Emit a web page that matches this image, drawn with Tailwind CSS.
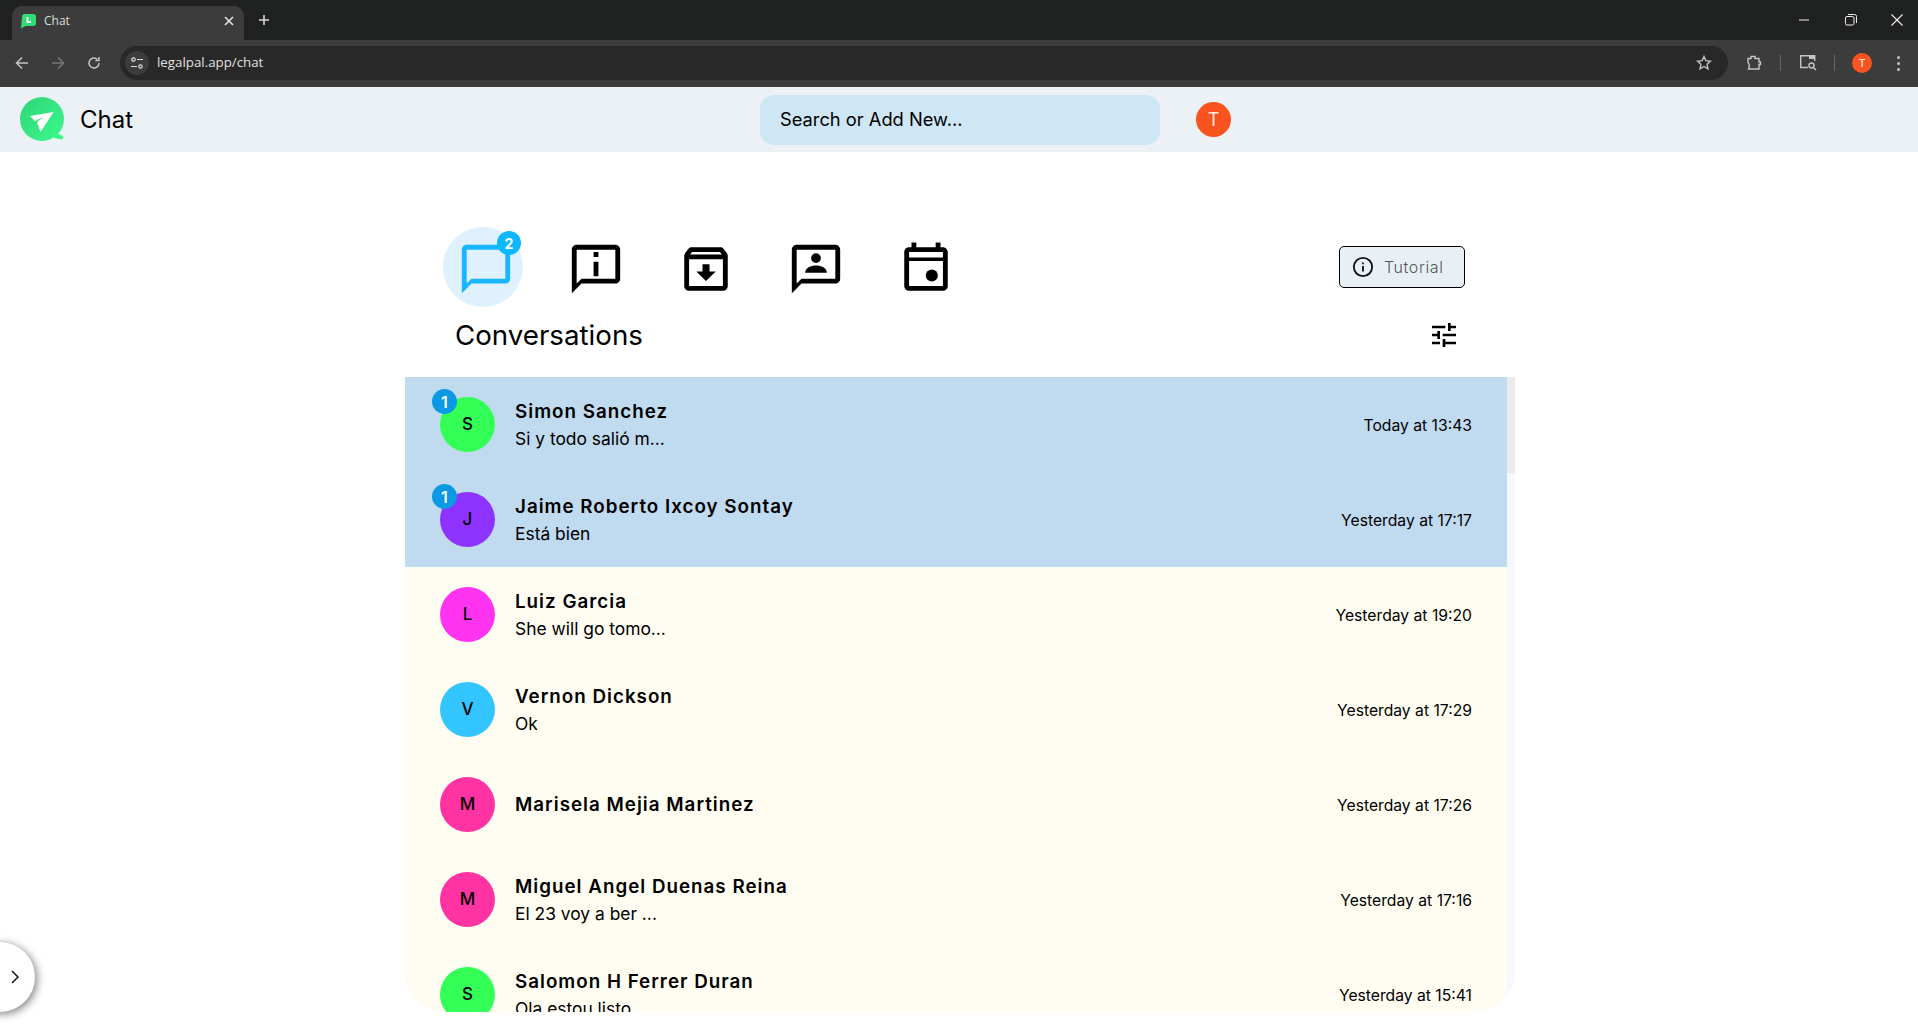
<!DOCTYPE html>
<html lang="en">
  <head>
    <meta charset="UTF-8" />
    <title>Chat</title>
    <script src="https://cdn.jsdelivr.net/npm/@tailwindcss/browser@4"></script>
  </head>
  <body class="relative h-[1030px] w-[1918px] overflow-hidden bg-white font-['Inter',sans-serif] text-black">
    <!-- Browser tab strip -->
    <div class="flex h-10 items-end bg-[#202221] pl-3 font-['Open_Sans',sans-serif]">
      <div class="flex h-[34px] w-[232px] items-center rounded-t-[10px] bg-[#3c3c3c] pb-[4px] pl-[9px] pr-[10px]">
        <svg class="h-[15px] w-[15px]" viewBox="0 0 15 15">
          <path d="M3 0h9a3 3 0 0 1 3 3v6a3 3 0 0 1-3 3H4.500L0 14.500 1 3a3 3 0 0 1 2-3z" fill="#2fdc75" />
          <path d="M6.500 3v5h3.500" fill="none" stroke="#fff" stroke-width="1.800" />
        </svg>
        <span class="ml-[8px] text-[12px] text-[#dddddd]">Chat</span>
        <svg class="ml-auto h-[10px] w-[10px]" viewBox="0 0 10 10" stroke="#e2e2e2" stroke-width="1.600">
          <path d="M1 1l8 8M9 1l-8 8" />
        </svg>
      </div>
      <svg class="mb-[14px] ml-[14px] h-[12px] w-[12px]" viewBox="0 0 12 12" stroke="#d8d8d8" stroke-width="1.600">
        <path d="M6 1v10M1 6h10" />
      </svg>
      <div class="ml-auto mb-[14px] flex items-center">
        <svg class="h-[10px] w-[12px]" viewBox="0 0 12 10" stroke="#eeeeee"><path d="M1 5h10" /></svg>
        <svg class="ml-[35px] h-[12px] w-[12px]" viewBox="0 0 12 12" fill="none" stroke="#eeeeee">
          <rect x="0.500" y="2.500" width="8.500" height="8.500" rx="1.500" /><path d="M3 .5h6.500a2 2 0 0 1 2 2V9" />
        </svg>
        <svg class="ml-[34px] mr-[15px] h-[12px] w-[12px]" viewBox="0 0 12 12" stroke="#eeeeee" stroke-width="1.100">
          <path d="M.5.5l11 11M11.500.5l-11 11" />
        </svg>
      </div>
    </div>

    <!-- Browser toolbar -->
    <div class="flex h-[47px] items-center bg-[#3c3c3c] pb-[1px] font-['Open_Sans',sans-serif]">
      <svg class="ml-[15px] h-[14px] w-[14px]" viewBox="0 0 14 14" fill="none" stroke="#c4c4c4" stroke-width="1.500">
        <path d="M13 7H2M7 1.500L1.500 7 7 12.500" />
      </svg>
      <svg class="ml-[22px] h-[14px] w-[14px]" viewBox="0 0 14 14" fill="none" stroke="#777777" stroke-width="1.500">
        <path d="M1 7h11M7 1.500L12.500 7 7 12.500" />
      </svg>
      <svg class="ml-[22px] h-[14px] w-[14px]" viewBox="0 0 14 14" fill="none" stroke="#c4c4c4" stroke-width="1.500">
        <path d="M12 7a5 5 0 1 1-1.600-3.700M12 1v3.600H8.400" />
      </svg>
      <div class="ml-[19px] flex h-[34px] w-[1608px] items-center rounded-full bg-[#282828] pl-[5px] pr-[16px]">
        <div class="flex h-[24px] w-[24px] items-center justify-center rounded-full bg-[#3c3c3c]">
          <svg class="h-[14px] w-[14px]" viewBox="0 0 14 14" fill="none" stroke="#dddddd" stroke-width="1.200">
            <circle cx="3.500" cy="3.500" r="1.700" /><circle cx="10.500" cy="10.500" r="1.700" /><path d="M7 3.500h6M1 10.500h6" />
          </svg>
        </div>
        <span class="ml-[8px] text-[13.300px] text-[#e0e0e0]">legalpal.app/chat</span>
        <svg class="ml-auto h-[16px] w-[16px]" viewBox="0 0 16 16" fill="none" stroke="#c4c4c4" stroke-width="1.400">
          <path d="M8 1.500l1.900 4.200 4.600.5-3.400 3.100.9 4.500L8 11.500l-4 2.300.9-4.500L1.500 6.200l4.600-.5z" />
        </svg>
      </div>
      <svg class="ml-[18px] h-[16px] w-[16px]" viewBox="0 0 16 16" fill="none" stroke="#c4c4c4" stroke-width="1.400">
        <path d="M2 3.500h3V1.500h4v2h4v3.500h1.500v2.500H13V14H2.500l1-3.500-1.500-3.500z" />
      </svg>
      <div class="ml-[18px] h-[16px] w-[1px] bg-[#666666]"></div>
      <svg class="ml-[18px] h-[18px] w-[18px]" viewBox="0 0 18 18" fill="none" stroke="#c4c4c4" stroke-width="1.400">
        <path d="M9 13.500H1.700V1.700h14V7" /><path d="M10 1.700h5.700V5H10z" fill="#c4c4c4" stroke="none" />
        <circle cx="12.500" cy="11.500" r="2.500" /><path d="M14.500 13.500l2.500 2.500" />
      </svg>
      <div class="ml-[17px] h-[16px] w-[1px] bg-[#666666]"></div>
      <div class="ml-[17px] flex h-[20px] w-[20px] items-center justify-center rounded-full bg-[#f95420] text-[11px] font-semibold text-[#ffe0d0]">T</div>
      <div class="ml-[25px] flex flex-col gap-[3px]">
        <div class="h-[3px] w-[3px] rounded-full bg-[#c4c4c4]"></div>
        <div class="h-[3px] w-[3px] rounded-full bg-[#c4c4c4]"></div>
        <div class="h-[3px] w-[3px] rounded-full bg-[#c4c4c4]"></div>
      </div>
    </div>

    <!-- App header -->
    <header class="flex h-[65px] items-center bg-[#ecf1f6] pl-[20px]">
      <div class="flex w-[740px] items-center">
        <svg class="h-[46px] w-[46px]" viewBox="0 0 46 46">
          <defs>
            <linearGradient id="logoGrad" x1="0" y1="0" x2="1" y2="1">
              <stop offset="0" stop-color="#2ed57a" />
              <stop offset="1" stop-color="#3cf98a" />
            </linearGradient>
          </defs>
          <circle cx="22" cy="22" r="22" fill="url(#logoGrad)" />
          <path d="M36 36l6 2.500c1.500 1 1.500 3 .5 3.500s-2.500.3-9-1z" fill="#3cf98a" />
          <path d="M10 19l23.500-4-13 20-3.500-10 7-5.500-9 4.500z" fill="#ffffff" />
        </svg>
        <span class="ml-[14px] pt-[1px] text-[24px]">Chat</span>
      </div>
      <div class="flex h-[50px] w-[400px] items-center rounded-[14px] bg-[#cfe6f4] px-[20px] pt-[1px] text-[18.300px]">Search or Add New...</div>
      <div class="ml-[36px] flex h-[35px] w-[35px] items-center justify-center rounded-full bg-[#f95420] text-[18px] text-[#ffe7dc]">T</div>
    </header>

    <main class="ml-[405px] w-[1110px]">
      <!-- Section tabs -->
      <div class="flex h-[166px] items-start pl-[38px] pr-[50px] pt-[75px]">
        <div class="relative flex h-[80px] w-[80px] items-center justify-center rounded-full bg-[#def1fd]">
          <svg class="ml-[5px] mt-[3px] h-[58px] w-[58px]" viewBox="0 0 24 24" fill="#19b5fe">
            <path d="M20 2H4c-1.100 0-2 .9-2 2v18l4-4h14c1.100 0 2-.9 2-2V4c0-1.100-.9-2-2-2zm0 14H6l-2 2V4h16v12z" />
          </svg>
          <span class="absolute right-[2px] top-[4px] flex h-[24px] w-[24px] items-center justify-center rounded-full bg-[#0cb8ff] text-[14px] font-bold text-white">2</span>
        </div>
        <div class="ml-[30px] flex h-[80px] w-[80px] items-center justify-center">
          <svg class="ml-[5px] mt-[3px] h-[58px] w-[58px]" viewBox="0 0 24 24">
            <path d="M20 2H4c-1.100 0-2 .9-2 2v18l4-4h14c1.100 0 2-.9 2-2V4c0-1.100-.9-2-2-2zm0 14H6l-2 2V4h16v12z" />
            <path d="M11 5h2v2h-2zM11 9h2v6h-2z" />
          </svg>
        </div>
        <div class="ml-[30px] flex h-[80px] w-[80px] items-center justify-center">
          <svg class="ml-[5px] mt-[3px] h-[58px] w-[58px]" viewBox="0 0 24 24">
            <path d="M20.540 5.230l-1.390-1.680C18.880 3.210 18.470 3 18 3H6c-.47 0-.88.21-1.160.55L3.460 5.230C3.170 5.570 3 6.020 3 6.500V19c0 1.100.9 2 2 2h14c1.100 0 2-.9 2-2V6.500c0-.48-.17-.93-.46-1.270zM6.240 5h11.520l.81.97H5.440l.8-.97zM5 19V8h14v11H5zm8.450-9h-2.900v3H8l4 4 4-4h-2.550z" />
          </svg>
        </div>
        <div class="ml-[30px] flex h-[80px] w-[80px] items-center justify-center">
          <svg class="ml-[5px] mt-[3px] h-[58px] w-[58px]" viewBox="0 0 24 24">
            <path d="M20 2H4c-1.100 0-2 .9-2 2v18l4-4h14c1.100 0 2-.9 2-2V4c0-1.100-.9-2-2-2zm0 14H6l-2 2V4h16v12z" />
            <circle cx="12" cy="7.500" r="2" /><path d="M7.500 13.500c0-2 2.500-3 4.500-3s4.500 1 4.500 3z" />
          </svg>
        </div>
        <div class="ml-[30px] flex h-[80px] w-[80px] items-center justify-center">
          <svg class="ml-[5px] mt-[3px] h-[58px] w-[58px]" viewBox="0 0 24 24">
            <path fill-rule="evenodd" d="M16 1v2H8V1H6v2H5c-1.110 0-2 .9-2 2v14c0 1.100.89 2 2 2h14c1.100 0 2-.9 2-2V5c0-1.100-.9-2-2-2h-1V1h-2zM5 5h14v2.200H5zM5 8.700h14V19H5z" />
            <circle cx="14.400" cy="14.700" r="2.500" />
          </svg>
        </div>
        <button class="ml-auto mt-[19px] flex h-[42px] w-[126px] items-center rounded-[5px] border border-black bg-[#e9f0f5] pl-[12px] text-[16px] font-light tracking-[0.600px] text-[#555555]">
          <svg class="h-[22px] w-[22px]" viewBox="0 0 24 24" fill="none" stroke="#111111" stroke-width="2">
            <circle cx="12" cy="12" r="10" /><path d="M12 11v6M12 7v2" />
          </svg>
          <span class="ml-[10px]">Tutorial</span>
        </button>
      </div>

      <!-- Title row -->
      <div class="flex h-[59px] items-start pl-[50px] pr-[55px]">
        <h1 class="text-[27.700px] leading-[34px]">Conversations</h1>
        <svg class="ml-auto mt-[1px] h-[32px] w-[32px]" viewBox="0 0 24 24">
          <path d="M3 17v2h6v-2H3zM3 5v2h10V5H3zm10 16v-2h8v-2h-8v-2h-2v6h2zM7 9v2H3v2h4v2h2V9H7zm14 4v-2H11v2h10zm-6-4h2V7h4V5h-4V3h-2v6z" />
        </svg>
      </div>

      <!-- Conversation list -->
      <div class="flex h-[635px] overflow-hidden rounded-b-[40px]">
        <div class="w-[1102px] shrink-0">
          <div class="flex h-[95px] items-center bg-[#c0daf0] px-[35px]">
            <div class="relative flex h-[55px] w-[55px] items-center justify-center rounded-full bg-[#33ff57] pt-[1px] text-[17px] font-medium">
              S
              <span class="absolute left-[-8px] top-[-8px] flex h-[25px] w-[25px] items-center justify-center rounded-full bg-[#0a99e2] text-[16px] font-semibold text-white">1</span>
            </div>
            <div class="ml-[20px]">
              <div class="text-[18.800px] leading-[27px] font-semibold tracking-[1px]">Simon Sanchez</div>
              <div class="text-[17.400px] leading-[27px]">Si y todo salió m...</div>
            </div>
            <span class="ml-auto pt-[2px] text-[15.700px]">Today at 13:43</span>
          </div>
          <div class="flex h-[95px] items-center bg-[#c0daf0] px-[35px]">
            <div class="relative flex h-[55px] w-[55px] items-center justify-center rounded-full bg-[#8e33ff] pt-[1px] text-[17px] font-medium">
              J
              <span class="absolute left-[-8px] top-[-8px] flex h-[25px] w-[25px] items-center justify-center rounded-full bg-[#0a99e2] text-[16px] font-semibold text-white">1</span>
            </div>
            <div class="ml-[20px]">
              <div class="text-[18.800px] leading-[27px] font-semibold tracking-[1px]">Jaime Roberto Ixcoy Sontay</div>
              <div class="text-[17.400px] leading-[27px]">Está bien</div>
            </div>
            <span class="ml-auto pt-[2px] text-[15.700px]">Yesterday at 17:17</span>
          </div>
          <div class="flex h-[95px] items-center bg-[#fffdf2] px-[35px]">
            <div class="flex h-[55px] w-[55px] items-center justify-center rounded-full bg-[#ff33f0] pt-[1px] text-[17px] font-medium">L</div>
            <div class="ml-[20px]">
              <div class="text-[18.800px] leading-[27px] font-semibold tracking-[1px]">Luiz Garcia</div>
              <div class="text-[17.400px] leading-[27px]">She will go tomo...</div>
            </div>
            <span class="ml-auto pt-[2px] text-[15.700px]">Yesterday at 19:20</span>
          </div>
          <div class="flex h-[95px] items-center bg-[#fffdf2] px-[35px]">
            <div class="flex h-[55px] w-[55px] items-center justify-center rounded-full bg-[#33c5ff] pt-[1px] text-[17px] font-medium">V</div>
            <div class="ml-[20px]">
              <div class="text-[18.800px] leading-[27px] font-semibold tracking-[1px]">Vernon Dickson</div>
              <div class="text-[17.400px] leading-[27px]">Ok</div>
            </div>
            <span class="ml-auto pt-[2px] text-[15.700px]">Yesterday at 17:29</span>
          </div>
          <div class="flex h-[95px] items-center bg-[#fffdf2] px-[35px]">
            <div class="flex h-[55px] w-[55px] items-center justify-center rounded-full bg-[#ff33a1] pt-[1px] text-[17px] font-medium">M</div>
            <div class="ml-[20px]">
              <div class="text-[18.800px] leading-[27px] font-semibold tracking-[1px]">Marisela Mejia Martinez</div>
            </div>
            <span class="ml-auto pt-[2px] text-[15.700px]">Yesterday at 17:26</span>
          </div>
          <div class="flex h-[95px] items-center bg-[#fffdf2] px-[35px]">
            <div class="flex h-[55px] w-[55px] items-center justify-center rounded-full bg-[#ff33a1] pt-[1px] text-[17px] font-medium">M</div>
            <div class="ml-[20px]">
              <div class="text-[18.800px] leading-[27px] font-semibold tracking-[1px]">Miguel Angel Duenas Reina</div>
              <div class="text-[17.400px] leading-[27px]">El 23 voy a ber ...</div>
            </div>
            <span class="ml-auto pt-[2px] text-[15.700px]">Yesterday at 17:16</span>
          </div>
          <div class="flex h-[95px] items-center bg-[#fffdf2] px-[35px]">
            <div class="flex h-[55px] w-[55px] items-center justify-center rounded-full bg-[#33ff57] pt-[1px] text-[17px] font-medium">S</div>
            <div class="ml-[20px]">
              <div class="text-[18.800px] leading-[27px] font-semibold tracking-[1px]">Salomon H Ferrer Duran</div>
              <div class="text-[17.400px] leading-[27px]">Ola estou listo</div>
            </div>
            <span class="ml-auto pt-[2px] text-[15.700px]">Yesterday at 15:41</span>
          </div>
        </div>
        <!-- Scrollbar -->
        <div class="w-[8px] bg-[#f5f8ff]">
          <div class="h-[96px] bg-[#ebebeb]"></div>
        </div>
      </div>
    </main>

    <!-- Sidebar toggle -->
    <button class="absolute left-[-35px] top-[942px] flex h-[70px] w-[70px] items-center justify-end rounded-full bg-white pr-[16px] shadow-[2px_2px_8px_rgba(0,0,0,0.5)]">
      <svg class="h-[14px] w-[8px]" viewBox="0 0 8 14" fill="none" stroke="#111111" stroke-width="1.500">
        <path d="M1 1l6 6-6 6" />
      </svg>
    </button>
  </body>
</html>
